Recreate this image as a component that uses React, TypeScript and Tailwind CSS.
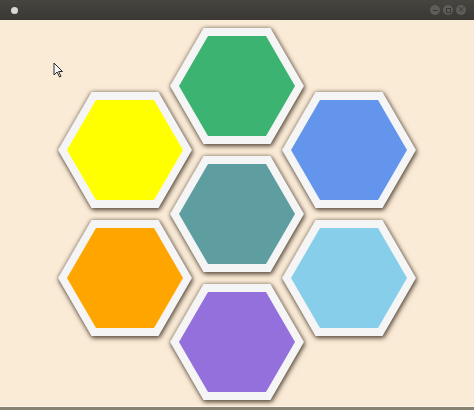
import React from 'react'

type Hex = { color: string }

const leftCol: Hex[] = [{ color: 'bg-[#ffff00]' }, { color: 'bg-[#ffa500]' }]
const centerCol: Hex[] = [
  { color: 'bg-[#3cb371]' },
  { color: 'bg-[#5f9ea0]' },
  { color: 'bg-[#9370db]' },
]
const rightCol: Hex[] = [{ color: 'bg-[#6495ed]' }, { color: 'bg-[#87ceeb]' }]

const hexClip = '[clip-path:polygon(25%_0,75%_0,100%_50%,75%_100%,25%_100%,0_50%)]'

function HexTile({ color }: Hex) {
  return (
    <div className="[filter:drop-shadow(1px_2px_2px_rgba(50,35,20,0.6))_drop-shadow(0_0_2px_rgba(50,35,20,0.55))]">
      <div
        className={`w-[134px] h-[116px] bg-[#f5f5f5] flex items-center justify-center ${hexClip}`}
      >
        <div className={`w-[116px] h-[100px] ${color} ${hexClip}`} />
      </div>
    </div>
  )
}

function TitleBar() {
  return (
    <div className="h-[20px] bg-gradient-to-b from-[#46453f] to-[#393834] flex items-center px-[10px] shrink-0">
      <div className="w-[7px] h-[7px] rounded-full bg-[#d8d8d6] ml-[1px]" />
      <div className="ml-auto flex items-center gap-[3px] mr-[-2px]">
        <div className="w-[10px] h-[10px] rounded-full bg-[#5e5d59] flex items-center justify-center">
          <div className="w-[5px] h-px bg-[#3a3935]" />
        </div>
        <div className="w-[10px] h-[10px] rounded-full bg-[#5e5d59] flex items-center justify-center">
          <div className="w-[5px] h-[5px] border border-[#3a3935]" />
        </div>
        <div className="w-[10px] h-[10px] rounded-full bg-[#5e5d59] flex items-center justify-center text-[#3a3935] text-[8px] leading-none font-['DejaVu_Sans',sans-serif]">
          ×
        </div>
      </div>
    </div>
  )
}

function Cursor() {
  return (
    <svg
      className="absolute left-[53px] top-[42px]"
      width="11"
      height="16"
      viewBox="0 0 11 16"
    >
      <path
        d="M1 1 L1 13 L4 10 L6.5 15 L8 14.3 L5.6 9.5 L9.5 9.5 Z"
        fill="#f4f4f4"
        stroke="#2a2a2a"
        strokeWidth="1"
        strokeLinejoin="round"
      />
    </svg>
  )
}

export default function App() {
  return (
    <div className="w-[474px] h-[410px] flex flex-col overflow-hidden">
      <TitleBar />
      <div className="relative h-[386px] bg-[#faebd7] flex items-start pl-[58px]">
        <Cursor />
        <div className="mt-[72px] flex flex-col gap-[12px]">
          {leftCol.map((h, i) => (
            <HexTile key={i} {...h} />
          ))}
        </div>
        <div className="-ml-[22px] mt-[8px] flex flex-col gap-[12px]">
          {centerCol.map((h, i) => (
            <HexTile key={i} {...h} />
          ))}
        </div>
        <div className="-ml-[22px] mt-[72px] flex flex-col gap-[12px]">
          {rightCol.map((h, i) => (
            <HexTile key={i} {...h} />
          ))}
        </div>
      </div>
      <div className="h-px bg-[#fbf4ea]" />
      <div className="flex-1 bg-[#8b8372]" />
    </div>
  )
}
